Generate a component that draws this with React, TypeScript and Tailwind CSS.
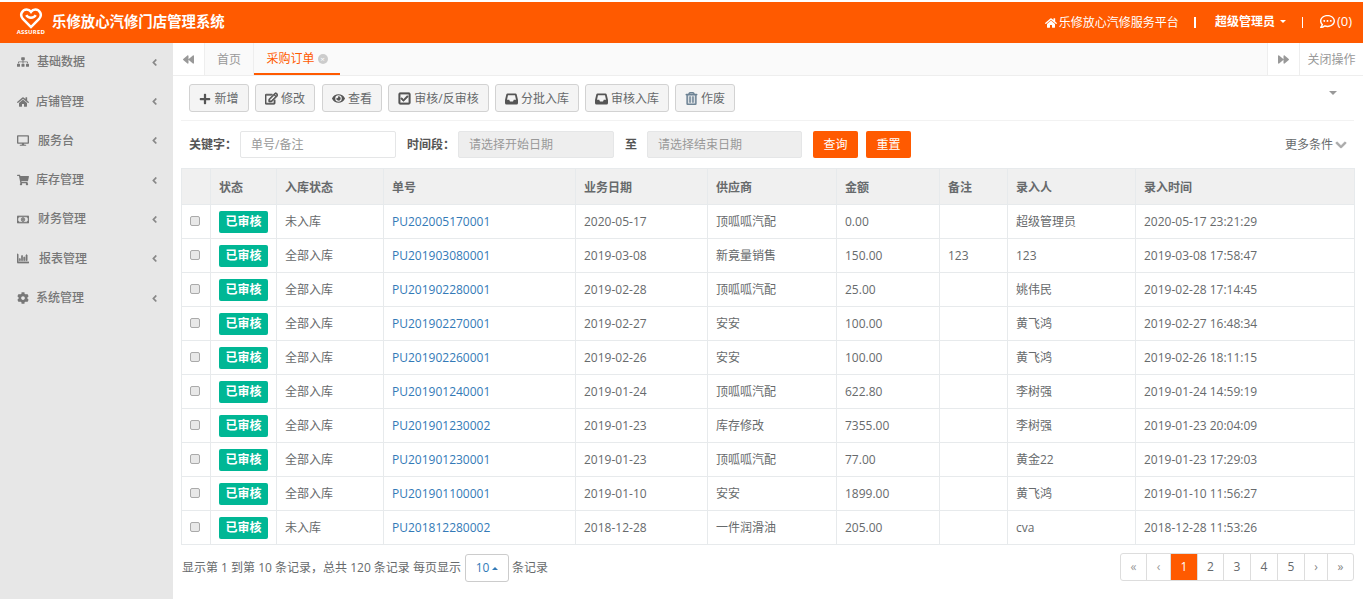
import React from "react";
import {
  FaSitemap, FaHome, FaDesktop, FaShoppingCart, FaRegMoneyBillAlt, FaRegChartBar, FaCog, FaAngleLeft,
  FaBackward, FaForward, FaPlus, FaRegEdit, FaRegCheckSquare, FaEye, FaRegTrashAlt, FaRegCommentDots, FaChevronDown,
} from "react-icons/fa";

const font = { fontFamily: '"Open Sans", "Noto Sans CJK SC", sans-serif' };

const menu = [
  { icon: <FaSitemap />, label: "基础数据", gap: "gap-[8px]" },
  { icon: <FaHome />, label: "店铺管理", gap: "gap-[7px]" },
  { icon: <FaDesktop className="text-[13px]" />, label: "服务台", gap: "gap-[9px]" },
  { icon: <FaShoppingCart />, label: "库存管理", gap: "gap-[7px]" },
  { icon: <FaRegMoneyBillAlt className="text-[13px]" stroke="currentColor" strokeWidth={30} />, label: "财务管理", gap: "gap-[9px]" },
  { icon: <FaRegChartBar className="text-[13px]" stroke="currentColor" strokeWidth={30} />, label: "报表管理", gap: "gap-[10px]" },
  { icon: <FaCog />, label: "系统管理", gap: "gap-[7px]" },
];

function Tray() {
  return (
    <svg width="13" height="12" viewBox="0 0 13 12">
      <path d="M2.6 0.5 H10.4 Q11.4 0.5 11.7 1.5 L13 7 V10 Q13 11.5 11.5 11.5 H1.5 Q0 11.5 0 10 V7 L1.3 1.5 Q1.6 0.5 2.6 0.5 Z M3 2.2 L2 6.8 H4.2 L5 8.4 H8 L8.8 6.8 H11 L10 2.2 Z" fill="currentColor" fillRule="evenodd" />
    </svg>
  );
}

const tools = [
  { icon: <FaPlus className="text-[12px]" />, label: "新增", w: "w-[60px]", m: "" },
  { icon: <FaRegEdit className="text-[13px]" stroke="currentColor" strokeWidth={30} />, label: "修改", w: "w-[60px]", m: "" },
  { icon: <FaEye className="text-[13px]" />, label: "查看", w: "w-[60px]", m: "ml-px" },
  { icon: <FaRegCheckSquare className="text-[13px]" stroke="currentColor" strokeWidth={30} />, label: "审核/反审核", w: "w-[101px]", m: "" },
  { icon: <Tray />, label: "分批入库", w: "w-[84px]", m: "" },
  { icon: <Tray />, label: "审核入库", w: "w-[84px]", m: "" },
  { icon: <FaRegTrashAlt className="text-[13px] text-[#6f8596]" stroke="currentColor" strokeWidth={20} />, label: "作废", w: "w-[60px]", m: "" },
];

const heads = ["状态", "入库状态", "单号", "业务日期", "供应商", "金额", "备注", "录入人", "录入时间"];

const rows = [
  ["未入库", "PU202005170001", "2020-05-17", "顶呱呱汽配", "0.00", "", "超级管理员", "2020-05-17 23:21:29"],
  ["全部入库", "PU201903080001", "2019-03-08", "新竟量销售", "150.00", "123", "123", "2019-03-08 17:58:47"],
  ["全部入库", "PU201902280001", "2019-02-28", "顶呱呱汽配", "25.00", "", "姚伟民", "2019-02-28 17:14:45"],
  ["全部入库", "PU201902270001", "2019-02-27", "安安", "100.00", "", "黄飞鸿", "2019-02-27 16:48:34"],
  ["全部入库", "PU201902260001", "2019-02-26", "安安", "100.00", "", "黄飞鸿", "2019-02-26 18:11:15"],
  ["全部入库", "PU201901240001", "2019-01-24", "顶呱呱汽配", "622.80", "", "李树强", "2019-01-24 14:59:19"],
  ["全部入库", "PU201901230002", "2019-01-23", "库存修改", "7355.00", "", "李树强", "2019-01-23 20:04:09"],
  ["全部入库", "PU201901230001", "2019-01-23", "顶呱呱汽配", "77.00", "", "黄金22", "2019-01-23 17:29:03"],
  ["全部入库", "PU201901100001", "2019-01-10", "安安", "1899.00", "", "黄飞鸿", "2019-01-10 11:56:27"],
  ["未入库", "PU201812280002", "2018-12-28", "一件润滑油", "205.00", "", "cva", "2018-12-28 11:53:26"],
];

const pages = [
  { t: "«", w: "w-[26px]", c: "text-[#999]" },
  { t: "‹", w: "w-[24px]", c: "text-[#999]" },
  { t: "1", w: "w-[27px]", c: "bg-[#ff5a00] text-white" },
  { t: "2", w: "w-[26px]", c: "text-[#676a6c]" },
  { t: "3", w: "w-[27px]", c: "text-[#676a6c]" },
  { t: "4", w: "w-[27px]", c: "text-[#676a6c]" },
  { t: "5", w: "w-[27px]", c: "text-[#676a6c]" },
  { t: "›", w: "w-[23px]", c: "text-[#888]" },
  { t: "»", w: "w-[25px]", c: "text-[#888]" },
];

function Logo() {
  return (
    <div className="flex w-[32px] flex-col items-center pb-[2px] text-white">
      <svg width="24" height="21" viewBox="0 0 24 22" fill="none" stroke="white">
        <path d="M12 20 L3.5 11.5 C-0.5 7 3 1.5 7.5 1.5 C9.5 1.5 11 2.5 12 4 C13 2.5 14.5 1.5 16.5 1.5 C21 1.5 24.5 7 20.5 11.5 Z" strokeWidth="2.6" />
        <path d="M7 7.5 C9 11 15 11 17 7.5" strokeWidth="2.6" />
      </svg>
      <span className="text-[6px] font-bold leading-[7px] tracking-[0.2px]">ASSURED</span>
    </div>
  );
}

export default function App() {
  return (
    <div className="flex h-[599px] w-[1363px] flex-col overflow-hidden bg-white pt-[2px] text-[12px] text-[#676a6c]" style={font}>
      <header className="flex h-[41px] shrink-0 items-center justify-between bg-[#ff5a00] pl-[15px] text-white">
        <div className="flex items-center gap-[5px]">
          <Logo />
          <span className="pb-[2px] text-[14.4px] font-bold">乐修放心汽修门店管理系统</span>
        </div>
        <div className="flex items-center">
          <span className="flex items-center gap-[2px]"><FaHome className="text-[12px]" />乐修放心汽修服务平台</span>
          <span className="ml-[15px] h-[11px] w-[2px] bg-white" />
          <span className="ml-[19px] flex items-center gap-[5px] pb-[2px] font-bold">超级管理员<span className="h-0 w-0 border-x-[3.5px] border-t-[3.5px] border-x-transparent border-t-white" /></span>
          <span className="ml-[16px] h-[11px] w-px bg-white" />
          <span className="ml-[17px] mr-[11px] flex items-center gap-[2px] pb-[2px] text-[13px]"><FaRegCommentDots className="text-[15px]" />(0)</span>
        </div>
      </header>

      <div className="flex min-h-0 flex-1">
        <aside className="w-[173px] shrink-0 bg-[#e7e7e7] pt-[0.6px]">
          {menu.map((m) => (
            <div key={m.label} className="flex h-[39.3px] items-center justify-between pb-[2px] pl-[17px] pr-[13px] text-[#777]">
              <span className={`flex items-center ${m.gap} font-medium`}>
                <span className="flex w-[12px] justify-center text-[12px]">{m.icon}</span>
                {m.label}
              </span>
              <FaAngleLeft className="text-[11px] text-[#888]" />
            </div>
          ))}
        </aside>

        <main className="flex min-w-0 flex-1 flex-col">
          <div className="flex h-[33px] shrink-0 items-stretch border-b border-[#eeeeee] bg-[#fafafa]">
            <div className="flex w-[32px] items-center justify-center border-r border-[#eeeeee] bg-white text-[#999]"><FaBackward className="text-[11px]" /></div>
            <div className="flex w-[49px] items-center justify-center border-r border-[#eeeeee] pt-px text-[#999]">首页</div>
            <div className="flex w-[86px] items-center justify-center gap-[3px] border-b-2 border-[#ff5a00] pt-px text-[#ff5a00]">
              采购订单
              <span className="flex h-[10px] w-[10px] items-center justify-center rounded-full bg-[#ccc] text-[8px] leading-none text-white">×</span>
            </div>
            <div className="flex-1" />
            <div className="flex w-[33px] items-center justify-center border-x border-[#eeeeee] bg-white text-[#999]"><FaForward className="text-[11px]" /></div>
            <div className="flex w-[63px] items-center justify-center bg-white pt-px text-[#999]">关闭操作</div>
          </div>

          <div className="flex min-h-0 flex-1 flex-col pl-[8px] pr-[9px]">
            <div className="flex h-[45px] shrink-0 items-start justify-between border-b border-[#f2f2f2] pl-[8px] pr-[17px] pt-[8px]">
              <div className="flex gap-[6px]">
                {tools.map((t) => (
                  <button key={t.label} className={`flex h-[28px] ${t.w} ${t.m} items-center justify-center gap-[3px] rounded-[3px] border border-[#d2d2d2] bg-[#f4f4f4] pt-px text-[#676a6c]`}>
                    <span className="text-[#555]">{t.icon}</span>
                    {t.label}
                  </button>
                ))}
              </div>
              <span className="mt-[7px] h-0 w-0 border-x-[4px] border-t-[4px] border-x-transparent border-t-[#999]" />
            </div>

            <div className="flex h-[47px] shrink-0 items-start pl-[8px] pt-[10px]">
              <label className="flex h-[27px] w-[51px] items-center pt-px font-bold text-[#555]">关键字：</label>
              <div className="flex h-[27px] w-[156px] items-center rounded-[2px] border border-[#e5e6e7] bg-white pl-[10px] pt-px text-[#999]">单号/备注</div>
              <label className="ml-[11px] flex h-[27px] w-[51px] items-center pt-px font-bold text-[#555]">时间段：</label>
              <div className="flex h-[27px] w-[156px] items-center rounded-[2px] border border-[#e5e6e7] bg-[#eeeeee] pl-[10px] pt-px text-[#999]">请选择开始日期</div>
              <span className="ml-[11px] flex h-[27px] w-[22px] items-center font-bold text-[#555]">至</span>
              <div className="flex h-[27px] w-[155px] items-center rounded-[2px] border border-[#e5e6e7] bg-[#eeeeee] pl-[10px] pt-px text-[#999]">请选择结束日期</div>
              <button className="ml-[11px] h-[27px] w-[45px] rounded-[2px] bg-[#ff5a00] pt-px text-white">查询</button>
              <button className="ml-[8px] h-[27px] w-[45px] rounded-[2px] bg-[#ff5a00] pt-px text-white">重置</button>
              <span className="ml-auto mr-[7px] flex h-[27px] items-center gap-[2px]">更多条件<FaChevronDown className="text-[12px] text-[#aaa]" stroke="currentColor" strokeWidth={30} /></span>
            </div>

            <table className="w-[1173px] table-fixed border-collapse">
              <colgroup>
                {[29, 66, 107, 192, 132, 129, 103, 68, 128, 219].map((w, i) => <col key={i} style={{ width: w }} />)}
              </colgroup>
              <thead>
                <tr className="h-[36px] bg-[#f0f0f0]">
                  <th className="border border-[#e7eaec]" />
                  {heads.map((h) => <th key={h} className="border border-[#e7eaec] px-[8px] pt-[3px] text-left font-bold text-[#676a6c]">{h}</th>)}
                </tr>
              </thead>
              <tbody>
                {rows.map((r) => (
                  <tr key={r[1]} className="h-[34px]">
                    <td className="border border-[#e7eaec] pr-[2px] text-center align-middle">
                      <span className="mb-[3px] inline-block h-[10px] w-[10px] rounded-[2px] border border-[#aaa] bg-[#e8e8e8] align-middle" />
                    </td>
                    <td className="border border-[#e7eaec] px-[8px]">
                      <span className="flex h-[22px] w-[49px] items-center justify-center rounded-[2px] bg-[#00b795] font-bold text-white">已审核</span>
                    </td>
                    {r.map((c, i) => (
                      <td key={i} className={`border border-[#e7eaec] px-[8px] ${i === 1 ? "text-[#337ab7]" : ""}`}>{c}</td>
                    ))}
                  </tr>
                ))}
              </tbody>
            </table>

            <div className="flex items-start justify-between pl-px pt-[8px]">
              <div className="flex items-center gap-[3px] pt-[1px]">
                <span className="mr-px">显示第 1 到第 10 条记录，总共 120 条记录 每页显示</span>
                <span className="flex h-[28px] w-[44px] items-center justify-center gap-[3px] rounded-[3px] border border-[#ccc] text-[#337ab7]">10<span className="h-0 w-0 border-x-[3px] border-b-[3px] border-x-transparent border-b-[#337ab7]" /></span>
                <span>条记录</span>
              </div>
              <div className="flex h-[28px] overflow-hidden rounded-[3px] border border-[#dddddd]">
                {pages.map((p, i) => (
                  <span key={i} className={`flex items-center justify-center border-r border-[#dddddd] last:border-r-0 ${p.w} ${p.c}`}>{p.t}</span>
                ))}
              </div>
            </div>
          </div>
        </main>
      </div>
    </div>
  );
}
